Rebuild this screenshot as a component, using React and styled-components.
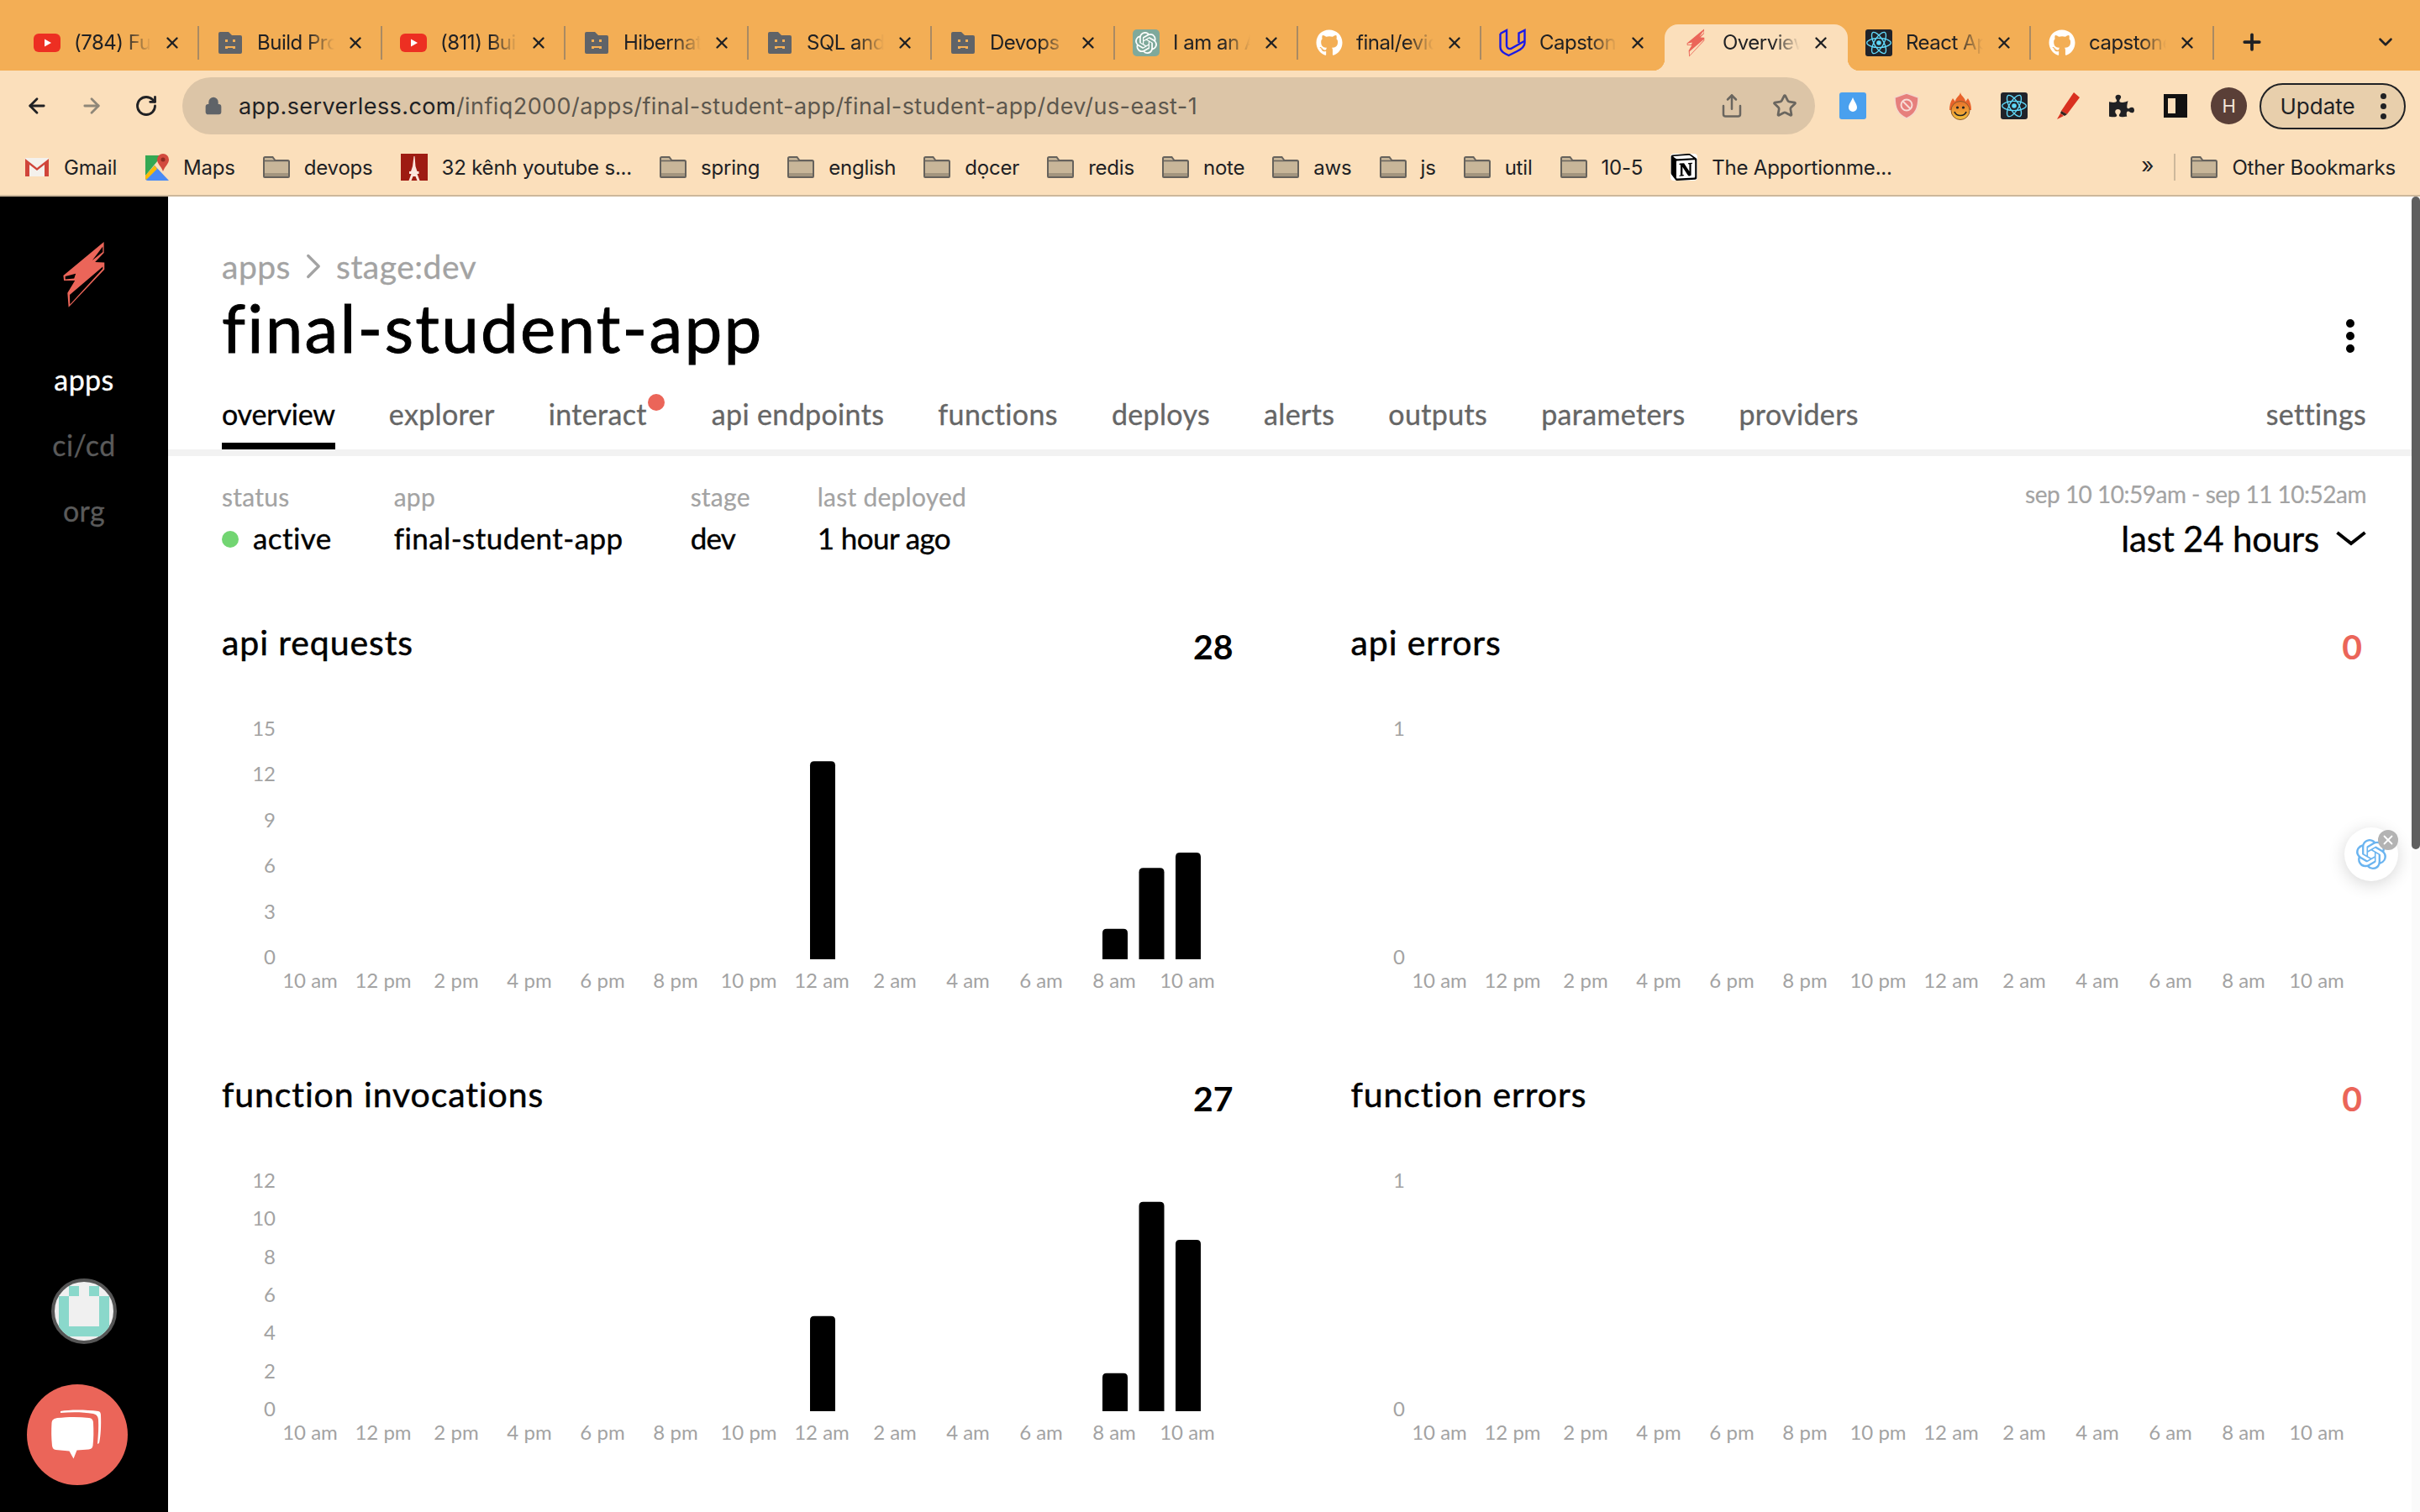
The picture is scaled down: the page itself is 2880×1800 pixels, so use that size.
import React from 'react';
import styled, { createGlobalStyle } from 'styled-components';
import { FaGithub, FaPuzzlePiece } from 'react-icons/fa';
import { SiOpenai, SiReact, SiNotion } from 'react-icons/si';
import { ArrowLeft, ArrowRight, RotateCw, Star, Share, X, Plus, ChevronRight, ChevronDown, Lock } from 'lucide-react';

const GlobalStyle = createGlobalStyle`
  html, body { margin: 0; padding: 0; background: #fff; }
  body { width: 2880px; height: 1800px; overflow: hidden; font-family: "Lato", "Liberation Sans", sans-serif; }
  * { box-sizing: border-box; }
`;

const Page = styled.div`
  width: 2880px;
  height: 1800px;
  display: flex;
  flex-direction: column;
  overflow: hidden;
`;

/* browser chrome */
const TabStrip = styled.div`
  height: 84px;
  flex: none;
  background: #f3ae55;
  display: flex;
  padding: 29px 0 0 19px;
  font-family: "Inter", "Liberation Sans", sans-serif;
`;

const TabItem = styled.div`
  position: relative;
  width: 218px;
  height: 55px;
  display: flex;
  align-items: center;
  padding: 0 0 12px 21px;
  border-radius: 16px 16px 0 0;
  background: ${p => (p.$active ? '#fbdfbb' : 'transparent')};
  &::after {
    content: '';
    position: absolute;
    right: 0;
    top: 2px;
    width: 2px;
    height: 40px;
    background: ${p => (p.$noSep ? 'transparent' : '#a98a63')};
  }
  ${p => p.$active && `
    &::before {
      content: '';
      position: absolute;
      left: -14px;
      right: -14px;
      bottom: 0;
      height: 14px;
      background:
        radial-gradient(circle at 0 0, #f3ae55 14px, #fbdfbb 14.5px) left bottom / 14px 14px no-repeat,
        radial-gradient(circle at 100% 0, #f3ae55 14px, #fbdfbb 14.5px) right bottom / 14px 14px no-repeat;
    }
  `}
`;

const TabIconBox = styled.div`
  width: 32px;
  height: 32px;
  flex: none;
  display: flex;
  align-items: center;
  justify-content: center;
  position: relative;
`;

const TabTitle = styled.div`
  width: 92px;
  margin-left: 16px;
  flex: none;
  font-size: 24px;
  letter-spacing: -0.5px;
  color: #202124;
  white-space: nowrap;
  overflow: hidden;
  -webkit-mask-image: linear-gradient(90deg, #000 65%, transparent 100%);
  mask-image: linear-gradient(90deg, #000 65%, transparent 100%);
`;

const TabClose = styled.div`
  width: 22px;
  margin-left: 14px;
  display: flex;
  justify-content: center;
  color: #202124;
  position: relative;
`;

const NewTab = styled.div`
  margin-left: 30px;
  height: 42px;
  display: flex;
  align-items: center;
  color: #202124;
`;

const TabListChevron = styled.div`
  margin-left: 131px;
  height: 42px;
  display: flex;
  align-items: center;
  color: #202124;
`;

const Toolbar = styled.div`
  height: 84px;
  flex: none;
  background: #fbdfbb;
  display: flex;
  align-items: center;
  padding: 0 17px 0 30px;
  font-family: "Inter", "Liberation Sans", sans-serif;
`;

const NavButton = styled.div`
  width: 28px;
  height: 28px;
  margin-right: ${p => p.$gap || 37}px;
  display: flex;
  align-items: center;
  justify-content: center;
  color: ${p => (p.$off ? '#8f8778' : '#202124')};
`;

const UrlPill = styled.div`
  flex: none;
  width: 1943px;
  height: 68px;
  margin-left: -9px;
  margin-right: 29px;
  border-radius: 34px;
  background: #dcc5a7;
  display: flex;
  align-items: center;
  padding: 0 21px 0 26px;
  color: #5f6368;
`;

const UrlText = styled.div`
  margin-left: 19px;
  font-size: 27px;
  letter-spacing: 0.42px;
  color: #5c574e;
  flex: 1;
  white-space: nowrap;
  b { font-weight: 400; color: #202124; }
`;

const PillAction = styled.div`
  width: 30px;
  height: 32px;
  margin-left: ${p => p.$gap || 0}px;
  display: flex;
  align-items: center;
  justify-content: center;
  color: #6a665f;
`;

const ExtRow = styled.div`
  display: flex;
  align-items: center;
  gap: 32px;
`;

const ExtIcon = styled.div`
  width: 32px;
  height: 32px;
  display: flex;
  align-items: center;
  justify-content: center;
`;

const ProfileBadge = styled.div`
  width: 44px;
  height: 44px;
  margin-left: 26px;
  border-radius: 50%;
  background: #5a3f37;
  color: #f4e6d8;
  font-size: 22px;
  display: flex;
  align-items: center;
  justify-content: center;
`;

const UpdatePill = styled.div`
  width: 175px;
  height: 55px;
  margin-left: 15px;
  border: 2px solid #202124;
  border-radius: 28px;
  background: #e8cfac;
  display: flex;
  align-items: center;
  justify-content: space-between;
  padding: 0 21px 0 22px;
  font-size: 26px;
  color: #202124;
`;

const VDots = styled.div`
  display: flex;
  flex-direction: column;
  gap: ${p => p.$gap || 5}px;
  margin: ${p => p.$margin || '0'};
  i {
    display: block;
    width: ${p => p.$size || 7}px;
    height: ${p => p.$size || 7}px;
    border-radius: 50%;
    background: ${p => p.$color || '#202124'};
  }
`;

const BookmarkBar = styled.div`
  height: 66px;
  flex: none;
  background: #fbdfbb;
  border-bottom: 2px solid #cdb89b;
  display: flex;
  align-items: center;
  padding: 0 29px 2px 29px;
  font-family: "Inter", "Liberation Sans", sans-serif;
`;

const BookmarkItem = styled.div`
  display: flex;
  align-items: center;
  gap: 17px;
  font-size: 24px;
  letter-spacing: -0.2px;
  color: #202124;
  white-space: nowrap;
  margin-right: ${p => p.$gap ?? 33}px;
  svg { flex: none; }
`;

const MoreMarks = styled.div`
  margin-left: auto;
  font-size: 26px;
  color: #202124;
  padding-right: 24px;
  margin-right: 18px;
  border-right: 2px solid #cdb89b;
  height: 32px;
  line-height: 28px;
`;

/* app */
const Body = styled.div`
  flex: 1;
  display: flex;
  min-height: 0;
`;

const Sidebar = styled.aside`
  width: 200px;
  flex: none;
  background: #000;
  display: flex;
  flex-direction: column;
  align-items: center;
  padding-top: 53px;
  position: relative;
`;

const SideLink = styled.div`
  font-size: 34px;
  letter-spacing: 0.4px;
  line-height: 44px;
  margin-top: ${p => p.$top || 34}px;
  color: ${p => (p.$on ? '#fff' : '#5a5a5a')};
  -webkit-text-stroke: 0.3px currentColor;
`;

const SideAvatar = styled.div`
  margin-top: auto;
  margin-bottom: 200px;
  width: 78px;
  height: 78px;
  border-radius: 50%;
  border: 4px solid #555;
  background: #f0f0f0;
  overflow: hidden;
`;

const ChatButton = styled.div`
  position: absolute;
  left: 32px;
  bottom: 32px;
  width: 120px;
  height: 120px;
  border-radius: 50%;
  background: #eb6559;
  display: flex;
  align-items: center;
  justify-content: center;
`;

const Main = styled.main`
  flex: 1;
  position: relative;
  min-width: 0;
  background: #fff;
`;

const ScrollTrack = styled.div`
  position: absolute;
  top: 0;
  right: 0;
  bottom: 0;
  width: 10px;
  background: #fafafa;
  div {
    height: 777px;
    background: #5f5f5f;
    border-radius: 5px;
  }
`;

const GptBubble = styled.div`
  position: absolute;
  left: 2590px;
  top: 751px;
  width: 64px;
  height: 64px;
  border-radius: 50%;
  background: #fff;
  box-shadow: 0 4px 20px rgba(0, 0, 0, 0.16);
  display: flex;
  align-items: center;
  justify-content: center;
  color: #6ab4f0;
`;

const GptClose = styled.div`
  position: absolute;
  right: 0;
  top: 3px;
  width: 24px;
  height: 24px;
  border-radius: 50%;
  background: #b3b3b3;
  color: #fff;
  display: flex;
  align-items: center;
  justify-content: center;
`;

const Header = styled.header`
  padding: 57px 64px 0;
  border-bottom: 8px solid #f2f2f2;
`;

const Crumbs = styled.div`
  display: flex;
  align-items: center;
  gap: 2px;
  font-size: 39px;
  letter-spacing: 0.5px;
  line-height: 52px;
  color: #a3a3a3;
  -webkit-text-stroke: 0.3px currentColor;
`;

const TitleRow = styled.div`
  display: flex;
  align-items: center;
  justify-content: space-between;
`;

const Title = styled.h1`
  margin: 0;
  font-size: 80px;
  font-weight: 400;
  letter-spacing: 2.2px;
  line-height: 93px;
  color: #000;
  -webkit-text-stroke: 0.9px #000;
`;

const Nav = styled.nav`
  display: flex;
  gap: 64px;
  margin-top: 35px;
`;

const NavItem = styled.div`
  position: relative;
  font-size: 34px;
  letter-spacing: ${p => (p.$on ? '-0.2px' : '0.35px')};
  line-height: 44px;
  padding-bottom: 12px;
  color: ${p => (p.$on ? '#000' : '#666')};
  -webkit-text-stroke: 0.35px currentColor;
  border-bottom: 8px solid ${p => (p.$on ? '#000' : 'transparent')};
  ${p => p.$dotted && 'margin-right: 13px;'}
  ${p => p.$end && 'margin-left: auto;'}
`;

const NavDot = styled.span`
  position: absolute;
  right: -21px;
  top: -2px;
  width: 20px;
  height: 20px;
  border-radius: 50%;
  background: #eb6559;
`;

const MetaRow = styled.section`
  display: flex;
  justify-content: space-between;
  padding: 30px 64px 0;
`;

const MetaCols = styled.div`
  display: flex;
  gap: 80px;
`;

const StatusCol = styled.div`
  margin-right: -6px;
`;

const MetaLabel = styled.div`
  font-size: 30px;
  letter-spacing: 0.25px;
  line-height: 36px;
  color: #a3a3a3;
  -webkit-text-stroke: 0.2px currentColor;
`;

const RangeLabel = styled.div`
  font-size: 28px;
  letter-spacing: -0.5px;
  line-height: 36px;
  color: #a3a3a3;
  -webkit-text-stroke: 0.2px currentColor;
`;

const MetaValue = styled.div`
  display: flex;
  align-items: center;
  gap: 17px;
  margin-top: 10px;
  font-size: 35px;
  letter-spacing: ${p => p.$spacing ?? 0.43}px;
  line-height: 42px;
  color: #000;
  -webkit-text-stroke: 0.4px #000;
`;

const StatusDot = styled.span`
  width: 20px;
  height: 20px;
  border-radius: 50%;
  background: #72d572;
  margin-top: 4px;
`;

const RangeBox = styled.div`
  display: flex;
  flex-direction: column;
  align-items: flex-end;
  margin-top: -3px;
`;

const RangeValue = styled.div`
  display: flex;
  align-items: center;
  gap: 20px;
  margin-top: 9px;
  font-size: 42px;
  letter-spacing: -0.2px;
  line-height: 52px;
  color: #000;
  -webkit-text-stroke: 0.4px #000;
`;

const ChartGrid = styled.section`
  display: grid;
  grid-template-columns: 1fr 1fr;
  column-gap: 135px;
  padding: 67px 64px 0;
`;

const ChartCard = styled.div`
  height: 538px;
`;

const ChartHead = styled.div`
  display: flex;
  justify-content: space-between;
  align-items: center;
  padding-right: 5px;
  height: 60px;
`;

const ChartTitle = styled.h2`
  margin: 0;
  font-size: 41px;
  font-weight: 400;
  letter-spacing: 0.9px;
  color: #000;
  -webkit-text-stroke: 0.5px #000;
`;

const ChartTotal = styled.div`
  font-size: 41px;
  font-weight: 700;
  padding-top: 10px;
  color: ${p => (p.$zero ? '#eb6559' : '#000')};
`;

const ChartSvg = styled.svg`
  display: block;
  margin-top: 76px;
  overflow: visible;
`;

const AxisText = styled.text`
  font-family: "Lato", "Liberation Sans", sans-serif;
  font-size: 24px;
  fill: #a3a3a3;
  dominant-baseline: middle;
`;

const TabGptBox = styled.div`
  width: 32px;
  height: 32px;
  border-radius: 5px;
  background: #7fa99b;
  display: flex;
  align-items: center;
  justify-content: center;
`;

const ReactBox = styled.div`
  width: 32px;
  height: 32px;
  border-radius: 3px;
  background: #20232a;
  display: flex;
  align-items: center;
  justify-content: center;
`;

const NotionBox = styled.div`
  width: 32px;
  height: 32px;
  background: #fff;
  border-radius: 4px;
  display: flex;
`;

/* icons */
const Youtube = () => (
  <svg width="32" height="22" viewBox="0 0 32 22">
    <rect width="32" height="22" rx="6" fill="#ed2f22" />
    <path d="M13 6.5 21 11l-8 4.5z" fill="#fff" />
  </svg>
);

const SadTab = () => (
  <svg width="28" height="26" viewBox="0 0 28 26">
    <path d="M2 0h10l4 4h10a2 2 0 0 1 2 2v18a2 2 0 0 1-2 2H2a2 2 0 0 1-2-2V2a2 2 0 0 1 2-2z" fill="#5f6368" />
    <path d="M8 9h3v3H8zM17 9h3v3h-3zM8 20v-3h12v3h-3v-1h-6v1z" fill="#f3ae55" />
  </svg>
);

const GptTab = () => (
  <TabGptBox><SiOpenai size={26} color="#fff" /></TabGptBox>
);

const ReactTab = () => (
  <ReactBox><SiReact size={30} color="#61dafb" /></ReactBox>
);

const Udacity = () => (
  <svg width="32" height="34" viewBox="0 0 32 34" fill="none" stroke="#1a1ae8" strokeWidth="2.4">
    <path d="M1.5 6 9 2v18c0 3 2 4.500 5 4l16-9" />
    <path d="M1.500 6v16c0 4 2 6 6 8l4 2 10-5c6-3 9-6 9-10V2l-7 3.500V17" />
  </svg>
);

const Bolt = ({ width, height, bg = '#000' }) => (
  <svg width={width} height={height} viewBox="40 22 156 244">
    <path d="M190 25v40l-32 33 34 2v25L62 262l-4-52 27-45-40 0-2-18z" fill="#eb6559" />
    <path d="M186 42v20l-38 30z" fill={bg} />
    <path d="M50 150l38-10-6 18-32 3zM66 217l120-102v8L67 252z" fill={bg} />
  </svg>
);

const GmailMark = () => (
  <svg width="30" height="24" viewBox="0 0 30 24">
    <rect x="1" y="1" width="28" height="22" fill="#f4f1ec" />
    <path d="M1 23V2l14 11L29 2v21h-5V9l-9 7-9-7v14z" fill="#d0453a" />
  </svg>
);

const MapsMark = () => (
  <svg width="28" height="32" viewBox="0 0 28 32">
    <path d="M0 2h20L0 26z" fill="#34a853" />
    <path d="M0 26 11 14l17 18H3a3 3 0 0 1-3-3z" fill="#4a8af4" />
    <path d="M0 26v3a3 3 0 0 0 1 2L14 18l-3-4z" fill="#fbbc04" />
    <path d="M21 0a7 7 0 0 1 7 7c0 5-5 8-7 14-2-6-7-9-7-14a7 7 0 0 1 7-7z" fill="#d24a3e" />
    <circle cx="21" cy="7" r="2.500" fill="#8f2b22" />
  </svg>
);

const EiffelMark = () => (
  <svg width="32" height="32" viewBox="0 0 32 32">
    <rect width="32" height="32" fill="#9e1b12" />
    <path d="M15.500 3h1l1 12 2 6h2v3h-2l3 8h-3l-2-5h-3l-2 5h-3l3-8H10v-3h2l2-6z" fill="#fbe4dc" />
  </svg>
);

const Folder = () => (
  <svg width="32" height="26" viewBox="0 0 32 26">
    <path d="M1 24V2.500C1 1.700 1.700 1 2.500 1h9l3 4h15c.8 0 1.500.7 1.500 1.500V24c0 .6-.4 1-1 1H2c-.6 0-1-.4-1-1z" fill="#c8b699" stroke="#66625c" strokeWidth="2" />
    <path d="M2 5.500h28" stroke="#66625c" strokeWidth="1.500" />
    <rect x="2" y="20" width="28" height="4" fill="#a2947e" />
  </svg>
);

const NotionMark = () => (
  <NotionBox><SiNotion size={32} color="#000" /></NotionBox>
);

const DropExt = () => (
  <svg width="32" height="32" viewBox="0 0 32 32">
    <rect width="32" height="32" rx="3" fill="#4aa0ee" />
    <path d="M16 6c2 5 5 8 5 12a5 5 0 0 1-10 0c0-4 3-7 5-12z" fill="#fff" />
  </svg>
);

const ShieldExt = () => (
  <svg width="30" height="32" viewBox="0 0 30 32">
    <path d="M15 1l14 5c0 12-3 20-14 25C4 26 1 18 1 6z" fill="#e67f7c" stroke="#f4d9cc" strokeWidth="1.500" />
    <circle cx="15" cy="15" r="6.500" fill="none" stroke="#f8dcd6" strokeWidth="2" />
    <path d="M10.500 10.500l9 9" stroke="#f8dcd6" strokeWidth="2" />
  </svg>
);

const HolaExt = () => (
  <svg width="26" height="33" viewBox="0 0 26 33">
    <defs>
      <linearGradient id="holaFace" x1="0" y1="0" x2="0" y2="1">
        <stop offset="0" stopColor="#e8702a" />
        <stop offset="1" stopColor="#f4c23c" />
      </linearGradient>
    </defs>
    <path d="M13 0c1 5 6 6 6 11l3-4c3 4 4 9 4 14H0c0-5 1-10 4-14l3 4c0-5 5-6 6-11z" fill="#e8622a" />
    <circle cx="13" cy="21.500" r="11" fill="url(#holaFace)" stroke="#8b5a2b" strokeWidth="1" />
    <circle cx="9.500" cy="18" r="1.600" fill="#222" />
    <circle cx="16.500" cy="18" r="1.600" fill="#222" />
    <path d="M6 23c2 6 12 6 14 0" fill="none" stroke="#222" strokeWidth="1.700" />
  </svg>
);

const MarkerExt = () => (
  <svg width="28" height="32" viewBox="0 0 28 32">
    <path d="M21 0l7 6-15 20-7-4z" fill="#d9301f" />
    <path d="M6 22l7 4-3 2-5-3z" fill="#33211c" />
    <path d="M5 25l4 3-8 4z" fill="#d9301f" />
  </svg>
);

const PanelExt = () => (
  <svg width="28" height="28" viewBox="0 0 28 28">
    <path d="M0 0h28v28H0zM5 5v18h9V5z" fill="#111" fillRule="evenodd" />
  </svg>
);

const Identicon = () => (
  <svg width="70" height="70" viewBox="0 0 70 70" style={{ display: 'block' }}>
    <path d="M5 17h12v36h36V17h12v48H5zM17 5h12v12H17zM41 5h12v12H41z" fill="#8ad8cb" />
  </svg>
);

const ChatIcon = () => (
  <svg width="62" height="60" viewBox="0 0 62 60">
    <path d="M11 2C22 0 40 0 56 2c2 .5 3 2 3 5 .5 12 0 24-2 33l-2 1c1-11 1.500-20 1-29-.5-4-2-6-6-7C38 3 24 3 11 4z" fill="#fff" />
    <path d="M7 10c14-1.500 26-1.500 38 0 3 .5 5 2 5 6 .5 9 .5 19-.5 27-.5 3-2 4-5 4.500l-14 1-4 10-5-9-16-1.500c-3-.5-4-2-4.500-5C0 33 0 25 .5 16 1 12 3 11 7 10z" fill="#fff" />
  </svg>
);

const RangeChevron = () => (
  <svg width="36" height="18" viewBox="0 0 36 18" fill="none" stroke="#000" strokeWidth="4">
    <path d="M1.500 2 18 15 34.500 2" />
  </svg>
);

const tabs = [
  { icon: <Youtube />, title: '(784) Full' },
  { icon: <SadTab />, title: 'Build Pro' },
  { icon: <Youtube />, title: '(811) Bui' },
  { icon: <SadTab />, title: 'Hibernate' },
  { icon: <SadTab />, title: 'SQL and' },
  { icon: <SadTab />, title: 'Devops' },
  { icon: <GptTab />, title: 'I am an A' },
  { icon: <FaGithub size={32} color="#fff" />, title: 'final/evidence' },
  { icon: <Udacity />, title: 'Capstone', noSep: true },
  { icon: <Bolt width={24} height={34} bg="#fbdfbb" />, title: 'Overview', active: true, noSep: true },
  { icon: <ReactTab />, title: 'React App' },
  { icon: <FaGithub size={32} color="#fff" />, title: 'capstone' },
];

const bookmarks = [
  { icon: <GmailMark />, label: 'Gmail', gap: 34 },
  { icon: <MapsMark />, label: 'Maps' },
  { icon: <Folder />, label: 'devops' },
  { icon: <EiffelMark />, label: '32 kênh youtube s...' },
  { icon: <Folder />, label: 'spring' },
  { icon: <Folder />, label: 'english' },
  { icon: <Folder />, label: 'dọcer' },
  { icon: <Folder />, label: 'redis' },
  { icon: <Folder />, label: 'note' },
  { icon: <Folder />, label: 'aws' },
  { icon: <Folder />, label: 'js' },
  { icon: <Folder />, label: 'util' },
  { icon: <Folder />, label: '10-5' },
  { icon: <NotionMark />, label: 'The Apportionme...' },
];

const navItems = ['overview', 'explorer', 'interact', 'api endpoints', 'functions', 'deploys', 'alerts', 'outputs', 'parameters', 'providers'];

const hours = ['10 am', '12 pm', '2 pm', '4 pm', '6 pm', '8 pm', '10 pm', '12 am', '2 am', '4 am', '6 am', '8 am', '10 am'];

const charts = [
  { title: 'api requests', total: '28', ticks: [15, 12, 9, 6, 3, 0], bars: [[0, 13], [8, 2], [9, 6], [10, 7]], max: 15 },
  { title: 'api errors', total: '0', ticks: [1, 0], bars: [], max: 1 },
  { title: 'function invocations', total: '27', ticks: [12, 10, 8, 6, 4, 2, 0], bars: [[0, 5], [8, 2], [9, 11], [10, 9]], max: 12 },
  { title: 'function errors', total: '0', ticks: [1, 0], bars: [], max: 1 },
];

// svg x of the first hour label, px per 2 hour step
const X0 = 105;
const STEP = 87;
const AXIS_Y = 274;
const BAR_BASE = AXIS_Y - 2;
const PLOT_H = 272;

function Chart({ ticks, bars, max }) {
  return (
    <ChartSvg width="1206" height="320" viewBox="0 0 1206 320">
      {ticks.map(t => (
        <AxisText key={t} x="64" y={AXIS_Y - 2 - (t / max) * PLOT_H} textAnchor="end">{t}</AxisText>
      ))}
      {hours.map((h, i) => (
        <AxisText key={i} x={X0 + STEP * i} y={AXIS_Y + 26} textAnchor="middle">{h}</AxisText>
      ))}
      {bars.map(([hour, v]) => {
        // hour counted from the 12 am label
        const x = X0 + STEP * 7 - 14 + hour * (STEP / 2);
        const y = BAR_BASE - (v / max) * PLOT_H;
        return <path key={hour} d={`M${x} ${BAR_BASE}V${y + 5}q0-5 5-5h20q5 0 5 5V${BAR_BASE}z`} fill="#000" />;
      })}
    </ChartSvg>
  );
}

export default function App() {
  return (
    <Page>
      <GlobalStyle />
      <TabStrip>
        {tabs.map(t => (
          <TabItem key={t.title} $active={t.active} $noSep={t.noSep}>
            <TabIconBox>{t.icon}</TabIconBox>
            <TabTitle>{t.title}</TabTitle>
            <TabClose><X size={22} strokeWidth={2.6} /></TabClose>
          </TabItem>
        ))}
        <NewTab><Plus size={30} strokeWidth={3} /></NewTab>
        <TabListChevron><ChevronDown size={26} strokeWidth={2.4} /></TabListChevron>
      </TabStrip>

      <Toolbar>
        <NavButton><ArrowLeft size={30} strokeWidth={2.4} /></NavButton>
        <NavButton $off><ArrowRight size={30} strokeWidth={2.4} /></NavButton>
        <NavButton $gap={38}><RotateCw size={28} strokeWidth={2.4} /></NavButton>
        <UrlPill>
          <Lock size={22} fill="#5f6368" strokeWidth={2.4} />
          <UrlText><b>app.serverless.com</b>/infiq2000/apps/final-student-app/final-student-app/dev/us-east-1</UrlText>
          <PillAction><Share size={30} strokeWidth={2} /></PillAction>
          <PillAction $gap={33}><Star size={30} strokeWidth={2.2} /></PillAction>
        </UrlPill>
        <ExtRow>
          <ExtIcon><DropExt /></ExtIcon>
          <ExtIcon><ShieldExt /></ExtIcon>
          <ExtIcon><HolaExt /></ExtIcon>
          <ExtIcon><ReactTab /></ExtIcon>
          <ExtIcon><MarkerExt /></ExtIcon>
          <ExtIcon><FaPuzzlePiece size={30} color="#202124" /></ExtIcon>
          <ExtIcon><PanelExt /></ExtIcon>
        </ExtRow>
        <ProfileBadge>H</ProfileBadge>
        <UpdatePill>Update<VDots><i /><i /><i /></VDots></UpdatePill>
      </Toolbar>

      <BookmarkBar>
        {bookmarks.map(b => (
          <BookmarkItem key={b.label} $gap={b.gap}>{b.icon}{b.label}</BookmarkItem>
        ))}
        <MoreMarks>»</MoreMarks>
        <BookmarkItem $gap={0}><Folder />Other Bookmarks</BookmarkItem>
      </BookmarkBar>

      <Body>
        <Sidebar>
          <Bolt width={52} height={80} />
          <SideLink $on $top={63}>apps</SideLink>
          <SideLink>ci/cd</SideLink>
          <SideLink>org</SideLink>
          <SideAvatar><Identicon /></SideAvatar>
          <ChatButton><ChatIcon /></ChatButton>
        </Sidebar>

        <Main>
          <Header>
            <Crumbs>apps<ChevronRight size={50} strokeWidth={1.6} />stage:dev</Crumbs>
            <TitleRow>
              <Title>final-student-app</Title>
              <VDots $size={10} $gap={5} $color="#000" $margin="20px 14px 0 0"><i /><i /><i /></VDots>
            </TitleRow>
            <Nav>
              {navItems.map((n, i) => (
                <NavItem key={n} $on={i === 0} $dotted={n === 'interact'}>{n}{n === 'interact' && <NavDot />}</NavItem>
              ))}
              <NavItem $end>settings</NavItem>
            </Nav>
          </Header>

          <MetaRow>
            <MetaCols>
              <StatusCol><MetaLabel>status</MetaLabel><MetaValue><StatusDot />active</MetaValue></StatusCol>
              <div><MetaLabel>app</MetaLabel><MetaValue>final-student-app</MetaValue></div>
              <div><MetaLabel>stage</MetaLabel><MetaValue $spacing={-0.8}>dev</MetaValue></div>
              <div><MetaLabel>last deployed</MetaLabel><MetaValue $spacing={-0.6}>1 hour ago</MetaValue></div>
            </MetaCols>
            <RangeBox>
              <RangeLabel>sep 10 10:59am - sep 11 10:52am</RangeLabel>
              <RangeValue>last 24 hours<RangeChevron /></RangeValue>
            </RangeBox>
          </MetaRow>

          <ChartGrid>
            {charts.map(c => (
              <ChartCard key={c.title}>
                <ChartHead>
                  <ChartTitle>{c.title}</ChartTitle>
                  <ChartTotal $zero={c.total === '0'}>{c.total}</ChartTotal>
                </ChartHead>
                <Chart ticks={c.ticks} bars={c.bars} max={c.max} />
              </ChartCard>
            ))}
          </ChartGrid>

          <GptBubble>
            <SiOpenai size={36} />
            <GptClose><X size={18} strokeWidth={2.4} /></GptClose>
          </GptBubble>
          <ScrollTrack><div /></ScrollTrack>
        </Main>
      </Body>
    </Page>
  );
}
